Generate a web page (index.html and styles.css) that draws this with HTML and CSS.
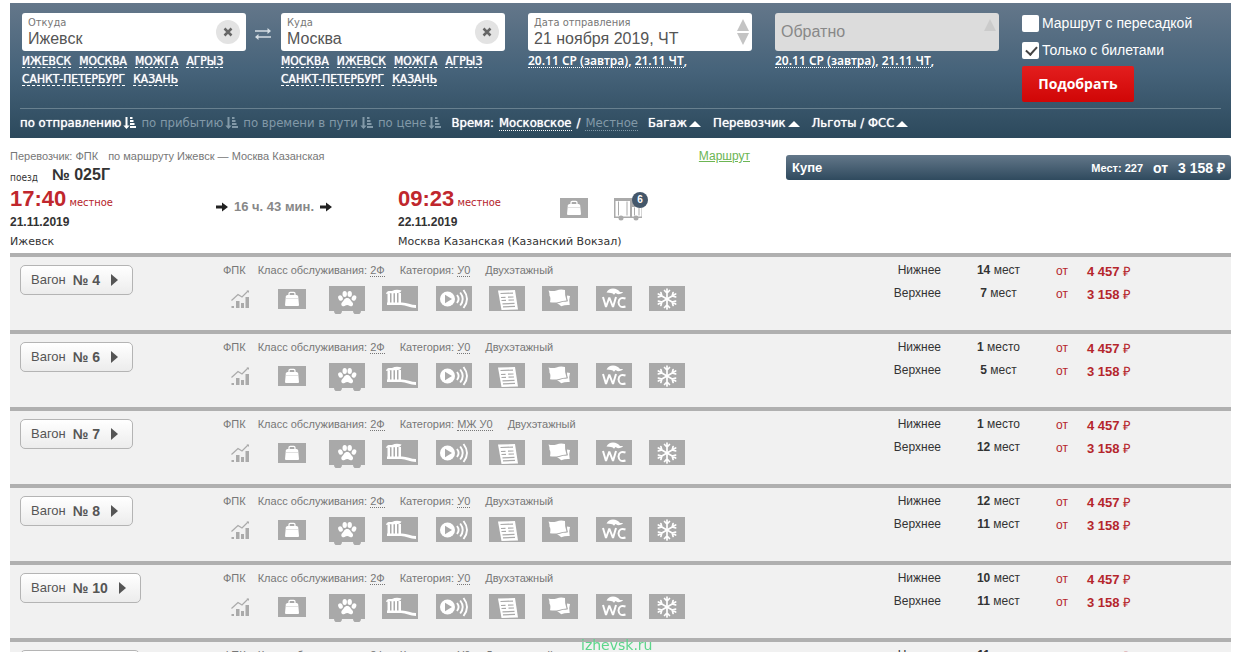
FILE: index.html
```html
<!DOCTYPE html>
<html lang="ru">
<head>
<meta charset="utf-8">
<title>Ижевск — Москва: билеты на поезд</title>
<link rel="stylesheet" href="styles.css">
</head>
<body>
<svg class="sprite" aria-hidden="true">
  <symbol id="sort" viewBox="0 0 13 14"><path d="M2.500 1h2v8.500h2.200L3.500 13 .3 9.500h2.200zM7 1h2.500v2H7zM7 4h3.500v2H7zM7 7h4.500v2H7zM7 10h6v2H7z" fill="currentColor"/></symbol>
  <symbol id="arrow" viewBox="0 0 12 10"><path d="M0 3.500h6V.4L12 5 6 9.600V6.500H0z" fill="currentColor"/></symbol>
  <symbol id="bag" viewBox="0 0 28 20"><path d="M0 0h28v20H0z" fill="#a9a9a9"/><path d="M11 6.500V4.700q0-1.300 1.300-1.300h3.400q1.300 0 1.300 1.300v1.800" fill="none" stroke="#fff" stroke-width="1.300"/><path d="M9.500 6h9q1.500 0 1.700 1.500L21 16q0 1-1 1H8q-1 0-1-1l.8-8.500Q8 6 9.500 6z" fill="#fff"/><path d="M7.800 9.500h12.400" stroke="#ccc" stroke-width=".6"/></symbol>
  <symbol id="chart" viewBox="0 0 20 20"><g fill="#aaa"><path d="M1.500 17h2.500v2H1.500zM6 12h3.500v7H6zM11 14h3v5h-3zM15.500 8H19v11h-3.500z"/><path d="M1.500 11.500 8 5.500l4 2.500 6-6" fill="none" stroke="#aaa" stroke-width="1.200"/><path d="M16.500 1.500H19V4z"/></g></symbol>
  <symbol id="pets" viewBox="0 0 36 28"><path d="M0 0h36v25h-4a4 3.500 0 0 1-8 0H13a4 3.500 0 0 1-8 0H0z" fill="#a9a9a9"/><g fill="#fff"><ellipse cx="11.500" cy="12" rx="2.200" ry="2.800" transform="rotate(-25 11.500 12)"/><ellipse cx="15.700" cy="8" rx="2.200" ry="3"/><ellipse cx="20.700" cy="8" rx="2.200" ry="3"/><ellipse cx="25" cy="12" rx="2.200" ry="2.800" transform="rotate(25 25 12)"/><path d="M18.200 12c3 0 3.300 2.700 5 4.200 1.700 1.600.8 4.300-1.500 4-1.400-.2-2-1.200-3.500-1.200s-2.100 1-3.500 1.200c-2.300.3-3.200-2.400-1.500-4 1.700-1.500 2-4.200 5-4.200z"/></g></symbol>
  <symbol id="hygiene" viewBox="0 0 36 25"><path d="M0 0h36v25H0z" fill="#a9a9a9"/><g fill="#fff"><path d="M4 8c1-4 4-2.500 6-3 3-1.500 6-1.500 9.500-.5-1 2.500-3 2.500-5 2.700C11 7.500 8 6.500 4 8zM5.500 7.500H8V18H5.500zM9.500 7h2v11h-2zM13 7h2v11h-2zM16.500 7H19v11h-2.500z"/><path d="M5 16.500h15c5 .2 9 2.500 14 2.500v3c-6 0-10-3-15-3H5z"/></g></symbol>
  <symbol id="media" viewBox="0 0 36 25"><path d="M0 0h36v25H0z" fill="#a9a9a9"/><circle cx="11.500" cy="13" r="7.500" fill="#fff"/><path d="M9 8.700v8.600l7-4.300z" fill="#a9a9a9"/><path d="M21 9q3.200 4 0 8M24.200 6.500q5 6.500 0 13M27.500 4q7 9 0 18" fill="none" stroke="#fff" stroke-width="1.900"/></symbol>
  <symbol id="press" viewBox="0 0 36 25"><path d="M0 0h36v25H0z" fill="#a9a9a9"/><path d="m9 4.500 17-.5 3 19.500-16.500.5z" fill="#fff"/><path d="m11.500 7.500 12.500-.4M12 11.500l4.500-.2M12.500 14.500l4.500-.2M19 11.200l5.500-.2M19.500 14.200l5.500-.2M13.500 17.800l12-.4M14 20.800l12-.4" fill="none" stroke="#a9a9a9" stroke-width="1.200"/></symbol>
  <symbol id="linen" viewBox="0 0 36 25"><path d="M0 0h36v25H0z" fill="#a9a9a9"/><path d="M6.500 4.500q4 1.200 8 0 4-1.700 8.500-.5-.5 5 1.500 10.500-4 0-7.500 1.500-4 1-9 .3 1-5-.5-6.500.5-2-1-5.300z" fill="#fff"/><path d="M25 9.500 28 10q-1.500 4-.3 9-4-.5-8.500 1.200-2-2-4.200-2.700 3-.5 6-1.700 3 0 5-.5-1.200-3-1-5.800z" fill="#fff"/></symbol>
  <symbol id="wc" viewBox="0 0 36 25"><path d="M0 0h36v25H0z" fill="#a9a9a9"/><path d="M10.500 6.500q2-4 6.500-4t7 3.500h3q-1 2-5 2.300L19.500 7 18 8.700q-1-1.500-3-1.700z" fill="#fff"/><path d="m7 11 3 10 3.300-9.500L17 21l3-10" fill="none" stroke="#fff" stroke-width="2" stroke-linejoin="bevel"/><path d="M29.500 12.500q-6.500-2-7 4 .5 6 7 4" fill="none" stroke="#fff" stroke-width="2"/></symbol>
  <symbol id="climate" viewBox="0 0 36 25"><path d="M0 0h36v25H0z" fill="#a9a9a9"/><g fill="none" stroke="#fff" stroke-width="1.700" stroke-linecap="round"><g id="ray"><path d="M18 3v20M15.500 4.500 18 7l2.500-2.500M15.500 21.500 18 19l2.500 2.500"/></g><use href="#ray" transform="rotate(60 18 13)"/><use href="#ray" transform="rotate(120 18 13)"/></g></symbol>
</svg>

<div class="page">
  <header class="search">
    <form class="search-form">
      <div class="cell">
        <div class="field"><label for="from">Откуда</label><input id="from" type="text" value="Ижевск"><button class="clear" type="button" aria-label="Очистить"><svg viewBox="0 0 10 10"><path d="m1.500 1.500 7 7m0-7-7 7" stroke="#666" stroke-width="2.500"/></svg></button></div>
        <div class="hints"><a href="#">ИЖЕВСК</a> <a href="#">МОСКВА</a> <a href="#">МОЖГА</a> <a href="#">АГРЫЗ</a> <a href="#">САНКТ-ПЕТЕРБУРГ</a> <a href="#">КАЗАНЬ</a></div>
      </div>
      <button class="swap" type="button" aria-label="Поменять местами"><svg viewBox="0 0 18 12"><path d="M1 3h15M2 9h15" stroke="#d5dde3" stroke-width="1.500"/><path d="M13.500 0v6l3.500-3zM4.500 6v6L1 9z" fill="#d5dde3"/></svg></button>
      <div class="cell">
        <div class="field"><label for="to">Куда</label><input id="to" type="text" value="Москва"><button class="clear" type="button" aria-label="Очистить"><svg viewBox="0 0 10 10"><path d="m1.500 1.500 7 7m0-7-7 7" stroke="#666" stroke-width="2.500"/></svg></button></div>
        <div class="hints"><a href="#">МОСКВА</a> <a href="#">ИЖЕВСК</a> <a href="#">МОЖГА</a> <a href="#">АГРЫЗ</a> <a href="#">САНКТ-ПЕТЕРБУРГ</a> <a href="#">КАЗАНЬ</a></div>
      </div>
      <div class="cell">
        <div class="field"><label for="date">Дата отправления</label><input id="date" type="text" value="21 ноября 2019, ЧТ"><svg class="spin" viewBox="0 0 12 26"><path d="m6 0 6 12H0zM0 14h12L6 26z" fill="#c4c4c4"/></svg></div>
        <div class="dates"><a href="#">20.11 СР (завтра)</a>, <a href="#">21.11 ЧТ</a>,</div>
      </div>
      <div class="cell">
        <div class="field off"><input type="text" placeholder="Обратно" aria-label="Обратно"><svg class="spin" viewBox="0 0 12 26"><path d="m6 0 6 12H0z" fill="#cbcbcb"/></svg></div>
        <div class="dates"><a href="#">20.11 СР (завтра)</a>, <a href="#">21.11 ЧТ</a>,</div>
      </div>
      <div class="options">
        <label><input type="checkbox">Маршрут с пересадкой</label>
        <label><input type="checkbox" checked>Только с билетами</label>
        <button class="submit" type="submit">Подобрать</button>
      </div>
    </form>
    <nav class="filters">
      <a class="sort" href="#">по отправлению<svg><use href="#sort"/></svg></a>
      <a class="sort dim" href="#">по прибытию<svg><use href="#sort"/></svg></a>
      <a class="sort dim" href="#">по времени в пути<svg><use href="#sort"/></svg></a>
      <a class="sort dim" href="#">по цене<svg><use href="#sort"/></svg></a>
      <span class="zone"><span>Время:</span><a class="dotted" href="#">Московское</a><span>/</span><a class="dotted dim" href="#">Местное</a></span>
      <a class="drop" href="#">Багаж</a>
      <a class="drop" href="#">Перевозчик</a>
      <a class="drop" href="#">Льготы / ФСС</a>
    </nav>
  </header>

  <main>
    <section class="train">
      <div class="trip">
        <p class="carrier"><span>Перевозчик: ФПК</span><span>по маршруту Ижевск — Москва Казанская</span><a href="#">Маршрут</a></p>
        <p class="number"><small>поезд</small><b>№ 025Г</b></p>
        <div class="legs">
          <div><p class="time"><b>17:40</b> местное</p><p class="day">21.11.2019</p><p class="station">Ижевск</p></div>
          <p class="duration"><svg><use href="#arrow"/></svg>16 ч. 43 мин.<svg><use href="#arrow"/></svg></p>
          <div><p class="time"><b>09:23</b> местное</p><p class="day">22.11.2019</p><p class="station">Москва Казанская (Казанский Вокзал)</p></div>
          <div class="luggage">
            <svg class="bag"><use href="#bag"/></svg>
            <span class="cases"><svg viewBox="0 0 28 24"><path d="M0 0h28v20H0z" fill="#aaa"/><path d="M1.500 3h14.500v15.500H1.500zM18 9h9.500v9.500H18z" fill="#fff"/><path d="M4.500 3.500v14M13 3.500v14M6.500 2h5M20.500 9.500v8M25 9.500v8" stroke="#aaa" fill="none"/><circle cx="7" cy="20" r="2.500" fill="#aaa"/><circle cx="22" cy="20" r="2.500" fill="#aaa"/></svg><i>6</i></span>
          </div>
        </div>
      </div>
      <div class="class-side"><a class="class-bar" href="#"><b>Купе</b><span class="seats">Мест: 227</span><span>от</span><b>3 158 ₽</b></a></div>
    </section>
    <div id="cars"></div>
  </main>
</div>
<div class="watermark">izhevsk.ru</div>
<script src="cars.js"></script>
</body>
</html>
```
FILE: styles.css
```css
* { box-sizing: border-box; }
html { scrollbar-width: none; }
body { margin: 0; background: #fff; color: #333; font: 12px/16px "Liberation Sans", Arial, sans-serif; }
p { margin: 0; }
a { color: inherit; text-decoration: none; }
button, input { font: inherit; }
.sprite { position: absolute; width: 0; height: 0; }
.page { padding: 3px 5px 0 10px; }

.search { height: 135px; background: linear-gradient(#64778a, #46637a 50%, #2c495c); color: #fff; font-family: "Noto Sans", sans-serif; font-weight: 600; }
.search-form { display: grid; grid-template-columns: 1fr 35px 1fr 23px 1fr 23px 1fr 232px; padding: 10px 0 0 12px; height: 105px; }
.search-form > :nth-child(4) { grid-column: 5; }
.search-form > :nth-child(5) { grid-column: 7; }
.field { position: relative; display: flex; flex-direction: column; height: 38px; padding: 4px 6px 0; border-radius: 3px; background: #fff; color: #777; }
.field label { font: 11px/12px "DejaVu Sans Condensed", "DejaVu Sans", sans-serif; }
.field input { width: 100%; height: 20px; padding: 0; border: 0; outline: 0; background: none; color: #555; font: 16px/20px "Liberation Sans", Arial, sans-serif; }
.field.off { justify-content: center; padding-top: 0; background: #dcdcdc; }
.field input::placeholder { color: #888; opacity: 1; }
.clear { position: absolute; top: 7px; right: 6px; width: 24px; height: 24px; padding: 7px; border: 0; border-radius: 50%; background: #e3e3e3; }
.clear svg { display: block; }
.spin { position: absolute; top: 6px; right: 3px; width: 12px; height: 26px; }
.swap { align-self: start; width: 18px; height: 12px; margin: 15px 0 0 8px; padding: 0; border: 0; background: none; }
.swap svg { display: block; }
.hints { display: flex; flex-wrap: wrap; gap: 4px 8px; padding-top: 3px; font: 12px/14px "DejaVu Sans Condensed", sans-serif; text-shadow: 0 0 1px #fff; }
.hints a { height: 14px; border-bottom: 1px dashed #fff; }
.dates { padding-top: 3px; line-height: 13px; }
.dates a { display: inline-block; height: 14px; border-bottom: 1px dotted #fff; }
.options { display: flex; flex-direction: column; align-items: flex-start; padding-left: 23px; font: 14px/18px "Liberation Sans", Arial, sans-serif; }
.options label { display: flex; align-items: center; gap: 3px; margin: 1px 0 8px; }
.options input { appearance: none; width: 17px; height: 17px; margin: 0; border-radius: 2px; background: #fff; }
.options input:checked::before { content: ""; display: block; width: 5px; height: 9px; margin: 2px 0 0 6px; border: solid #444; border-width: 0 2px 2px 0; transform: rotate(42deg); }
.submit { width: 112px; height: 36px; margin-top: -1px; padding: 0; border: 0; border-radius: 2px; background: linear-gradient(#e31e1e, #d00606); color: #fff; font: 700 14px/20px "Open Sans", sans-serif; }
.filters { display: flex; align-items: center; height: 30px; padding-bottom: 1px; margin: 0 10px; border-top: 1px solid #68808f; font: 13px/16px "DejaVu Sans Condensed", sans-serif; text-shadow: 0 0 1px #fff; white-space: nowrap; }
.sort { display: flex; align-items: center; gap: 2px; margin-right: 5px; }
.sort svg { width: 13px; height: 14px; }
.dim { color: #8299a8; text-shadow: none; }
.zone { display: flex; gap: 5px; margin: 0 10px 0 5px; }
.dotted { line-height: 15px; border-bottom: 1px dotted; }
.drop { margin-right: 12px; }
.drop::after { content: ""; display: inline-block; margin-left: 2px; border: solid transparent; border-width: 0 6px 6px; border-bottom-color: #fff; }

.train { display: flex; height: 115px; padding-top: 10px; }
.trip { flex: 0 0 776px; }
.carrier { display: flex; gap: 10px; color: #777; font-size: 11px; }
.carrier a { margin: 0 36px 0 auto; color: #6cb554; font-size: 12px; text-decoration: underline; }
.number { display: flex; align-items: center; gap: 14px; height: 22px; }
.number small { padding-top: 6px; font: 10px/12px "DejaVu Sans Condensed", sans-serif; }
.number b { font-size: 16px; }
.legs { display: grid; grid-template-columns: 206px 182px 162px 1fr; white-space: nowrap; }
.time { height: 26px; color: #b52229; font: 11px/26px "DejaVu Sans Condensed", sans-serif; }
.time b { font: 700 22px/26px "Liberation Sans", Arial, sans-serif; color: #c0272d; }
.day { height: 20px; font-weight: 700; line-height: 20px; }
.station { font: 11px/20px "DejaVu Sans", sans-serif; }
.duration { display: flex; align-items: center; gap: 6px; height: 42px; color: #888; font-size: 13px; font-weight: 700; }
.duration svg { width: 12px; height: 10px; color: #222; }
.luggage { display: flex; gap: 26px; padding-top: 12px; }
.bag { width: 28px; height: 20px; }
.cases { position: relative; width: 28px; height: 24px; }
.cases svg { display: block; }
.cases i { position: absolute; top: -6px; right: -6px; width: 16px; height: 16px; border-radius: 50%; background: #44576a; color: #fff; font: 700 10px/16px "Liberation Sans", sans-serif; text-align: center; }
.class-side { flex: 1; padding-top: 7px; }
.class-bar { display: flex; align-items: center; gap: 10px; height: 25px; padding: 0 6px; border-radius: 3px; background: linear-gradient(#637789, #2f4a5e); color: #fff; font-size: 14px; font-weight: 700; }
.class-bar b:first-child { margin-right: auto; font-size: 13px; }
.seats { font-size: 11px; }

.car { display: grid; grid-template-columns: 213px 1fr 163px 175px; height: 77px; padding-top: 8px; border-top: 4px solid #b0b0b0; background: #f1f1f1; white-space: nowrap; }
.car-button { display: flex; align-items: center; justify-self: start; align-self: start; gap: 7px; height: 30px; margin-left: 10px; padding: 0 14px 0 10px; border: 1px solid #b4b4b4; border-radius: 5px; background: linear-gradient(#fff, #ececec); color: #555; font: 13px/20px "Liberation Sans", sans-serif; }
.car-button b { font-size: 14px; }
.car-button::after { content: ""; margin-left: 4px; border: solid transparent; border-width: 6px 0 6px 7px; border-left-color: #555; }
.meta { display: flex; height: 21px; color: #777; font-size: 11px; line-height: 11px; }
.meta span { margin-right: 15px; }
.meta span:nth-child(1) { margin-right: 12px; }
.meta u { display: inline-block; height: 12px; border-bottom: 1px dotted #777; text-decoration: none; }
.amenities { display: flex; align-items: flex-start; gap: 23px; padding-left: 7px; }
.amenities .chart { width: 20px; height: 20px; margin-top: 3px; }
.amenities .bag { margin: 3px 0 0 5px; }
.services { display: flex; justify-content: space-between; width: 356px; }
.services svg { width: 36px; height: 25px; }
.services svg:first-child { height: 28px; }
.places { border-spacing: 0; align-self: start; }
.places td { height: 23px; padding: 0; vertical-align: top; line-height: 11px; }
.places td:first-child { width: 48px; text-align: right; }
.places td:last-child { text-align: center; }
.prices { display: grid; grid-template-columns: 31px 1fr; grid-auto-rows: 23px; align-content: start; line-height: 13px; color: #b5262c; }
.prices b { font-size: 13px; }
.prices b span { font-weight: 400; }
.watermark { position: fixed; left: 581px; bottom: -3px; color: #5cd68b; font: 14px/20px "DejaVu Sans", sans-serif; }
```
FILE: cars.js
```js
const cars = [
  { number: 4, category: "У0", lower: [14, "мест"], upper: [7, "мест"] },
  { number: 6, category: "У0", lower: [1, "место"], upper: [5, "мест"] },
  { number: 7, category: "МЖ У0", lower: [1, "место"], upper: [12, "мест"] },
  { number: 8, category: "У0", lower: [12, "мест"], upper: [11, "мест"] },
  { number: 10, category: "У0", lower: [10, "мест"], upper: [11, "мест"] },
  { number: 11, category: "У0", lower: [11, "мест"], upper: [11, "мест"] }
];
const services = ["pets", "hygiene", "media", "press", "linen", "wc", "climate"];
const icon = (name) => `<svg class="${name}"><use href="#${name}"/></svg>`;

document.getElementById("cars").innerHTML = cars.map((car) => `
  <section class="car">
    <button class="car-button" type="button">Вагон <b>№ ${car.number}</b></button>
    <div>
      <div class="meta"><span>ФПК</span><span>Класс обслуживания: <u>2Ф</u></span><span>Категория: <u>${car.category}</u></span><span>Двухэтажный</span></div>
      <div class="amenities">${icon("chart")}${icon("bag")}<div class="services">${services.map(icon).join("")}</div></div>
    </div>
    <table class="places">
      <tr><td>Нижнее</td><td><b>${car.lower[0]}</b> ${car.lower[1]}</td></tr>
      <tr><td>Верхнее</td><td><b>${car.upper[0]}</b> ${car.upper[1]}</td></tr>
    </table>
    <div class="prices"><span>от</span><b>4 457 <span>₽</span></b><span>от</span><b>3 158 <span>₽</span></b></div>
  </section>`).join("");
```
